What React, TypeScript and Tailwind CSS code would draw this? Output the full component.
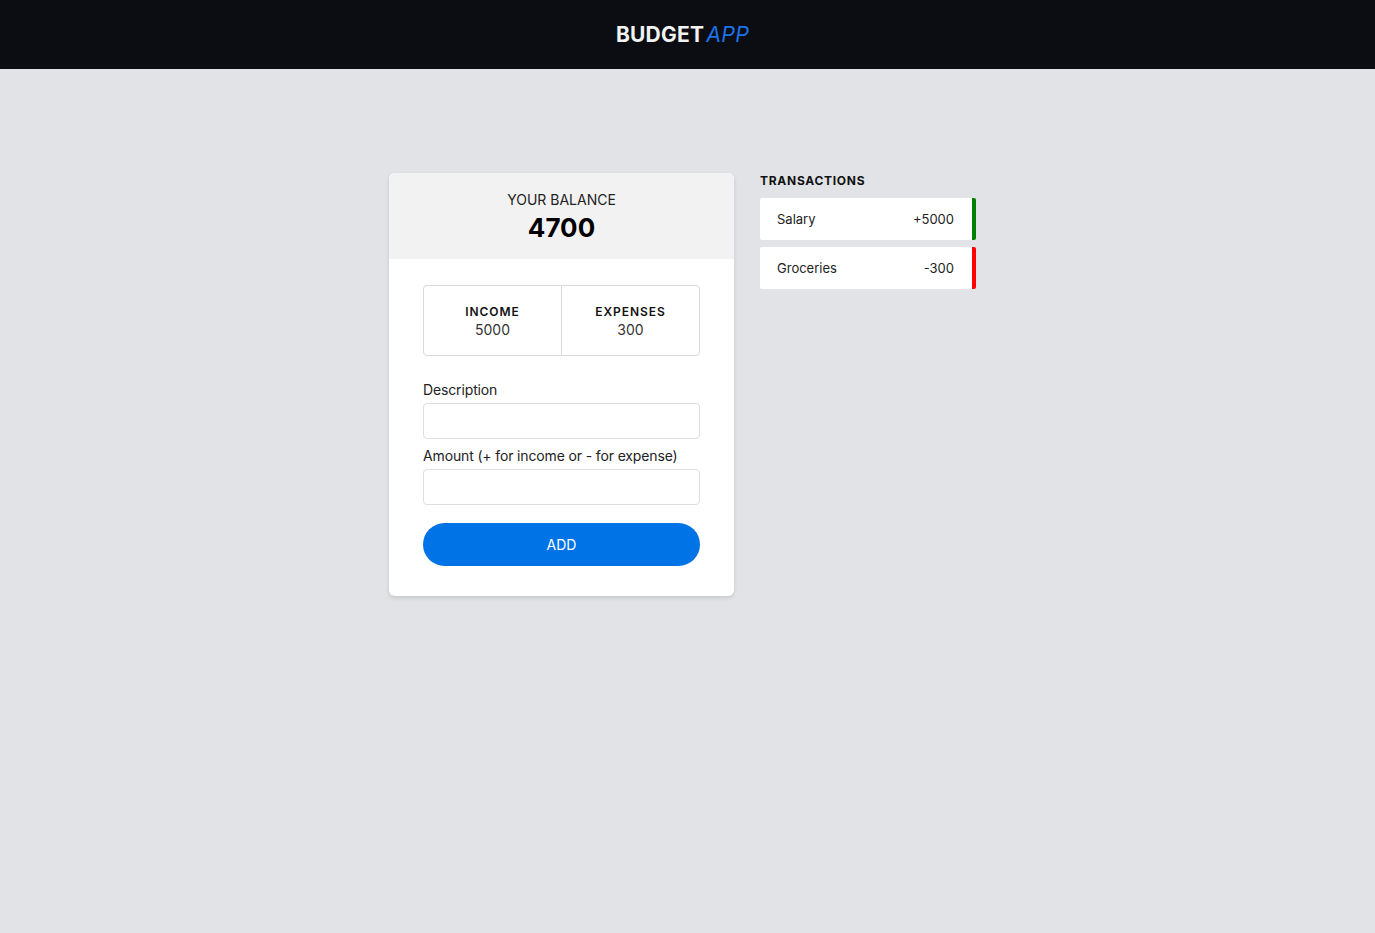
import React from "react";

export default function App() {
  return (
    <div className="min-h-[933px] bg-[#e1e3e7] text-[#111] font-['Inter',sans-serif]">
      <header className="h-[69px] bg-[#0b0d12] flex items-center justify-center">
        <div className="text-[21px] font-bold text-[#f2f2f2] tracking-[0.01em] ml-[-10px]">
          BUDGET<span className="ml-[2px] text-[#1a73e8] font-normal italic text-[21.5px]">APP</span>
        </div>
      </header>
      <main className="flex justify-center items-start gap-[26px] pt-[104px]">
        <section className="w-[345px] bg-white rounded-[6px] shadow-[0_2px_4px_rgba(0,0,0,0.12)] overflow-hidden">
          <div className="bg-[#f2f2f2] h-[86px] flex flex-col items-center pt-[18px]">
            <div className="text-[14px] leading-[18px] text-[#222]">YOUR BALANCE</div>
            <div className="text-[26px] leading-[32px] font-bold text-black mt-[3px]">4700</div>
          </div>
          <div className="px-[34px] pt-[26px] pb-[30px]">
            <div className="flex h-[71px] border border-[#d9d9d9] rounded-[4px]">
              <div className="flex-1 flex flex-col items-center justify-center pt-[2px] border-r border-[#d9d9d9]">
                <div className="text-[12px] font-semibold tracking-[0.08em] leading-[16px]">INCOME</div>
                <div className="text-[14px] leading-[20px] text-[#333]">5000</div>
              </div>
              <div className="flex-1 flex flex-col items-center justify-center pt-[2px]">
                <div className="text-[12px] font-semibold tracking-[0.08em] leading-[16px]">EXPENSES</div>
                <div className="text-[14px] leading-[20px] text-[#333]">300</div>
              </div>
            </div>
            <div className="mt-[25px] text-[14px] leading-[18px] text-[#222] tracking-[-0.01em]">Description</div>
            <input className="mt-[4px] block w-full h-[36px] border border-[#dedede] rounded-[4px] bg-white" />
            <div className="mt-[8px] text-[14px] leading-[18px] text-[#222] tracking-[-0.01em]">Amount (+ for income or - for expense)</div>
            <input className="mt-[4px] block w-full h-[36px] border border-[#dedede] rounded-[4px] bg-white" />
            <button className="mt-[18px] w-full h-[43px] rounded-full bg-[#0073e6] text-white text-[14px]">ADD</button>
          </div>
        </section>
        <aside className="w-[226px]">
          <div className="text-[12px] font-bold tracking-[0.06em] leading-[16px] text-[#111]">TRANSACTIONS</div>
          <div className="mt-[9px] flex flex-col gap-[7px] w-[216px]">
            <div className="h-[42px] bg-white rounded-[2px] border-r-4 border-[#008000] flex items-center justify-between pl-[17px] pr-[18px] pt-[2px] text-[13px] text-[#222]">
              <span>Salary</span>
              <span>+5000</span>
            </div>
            <div className="h-[42px] bg-white rounded-[2px] border-r-4 border-[#ff0000] flex items-center justify-between pl-[17px] pr-[18px] pt-[2px] text-[13px] text-[#222]">
              <span>Groceries</span>
              <span>-300</span>
            </div>
          </div>
        </aside>
      </main>
    </div>
  );
}
